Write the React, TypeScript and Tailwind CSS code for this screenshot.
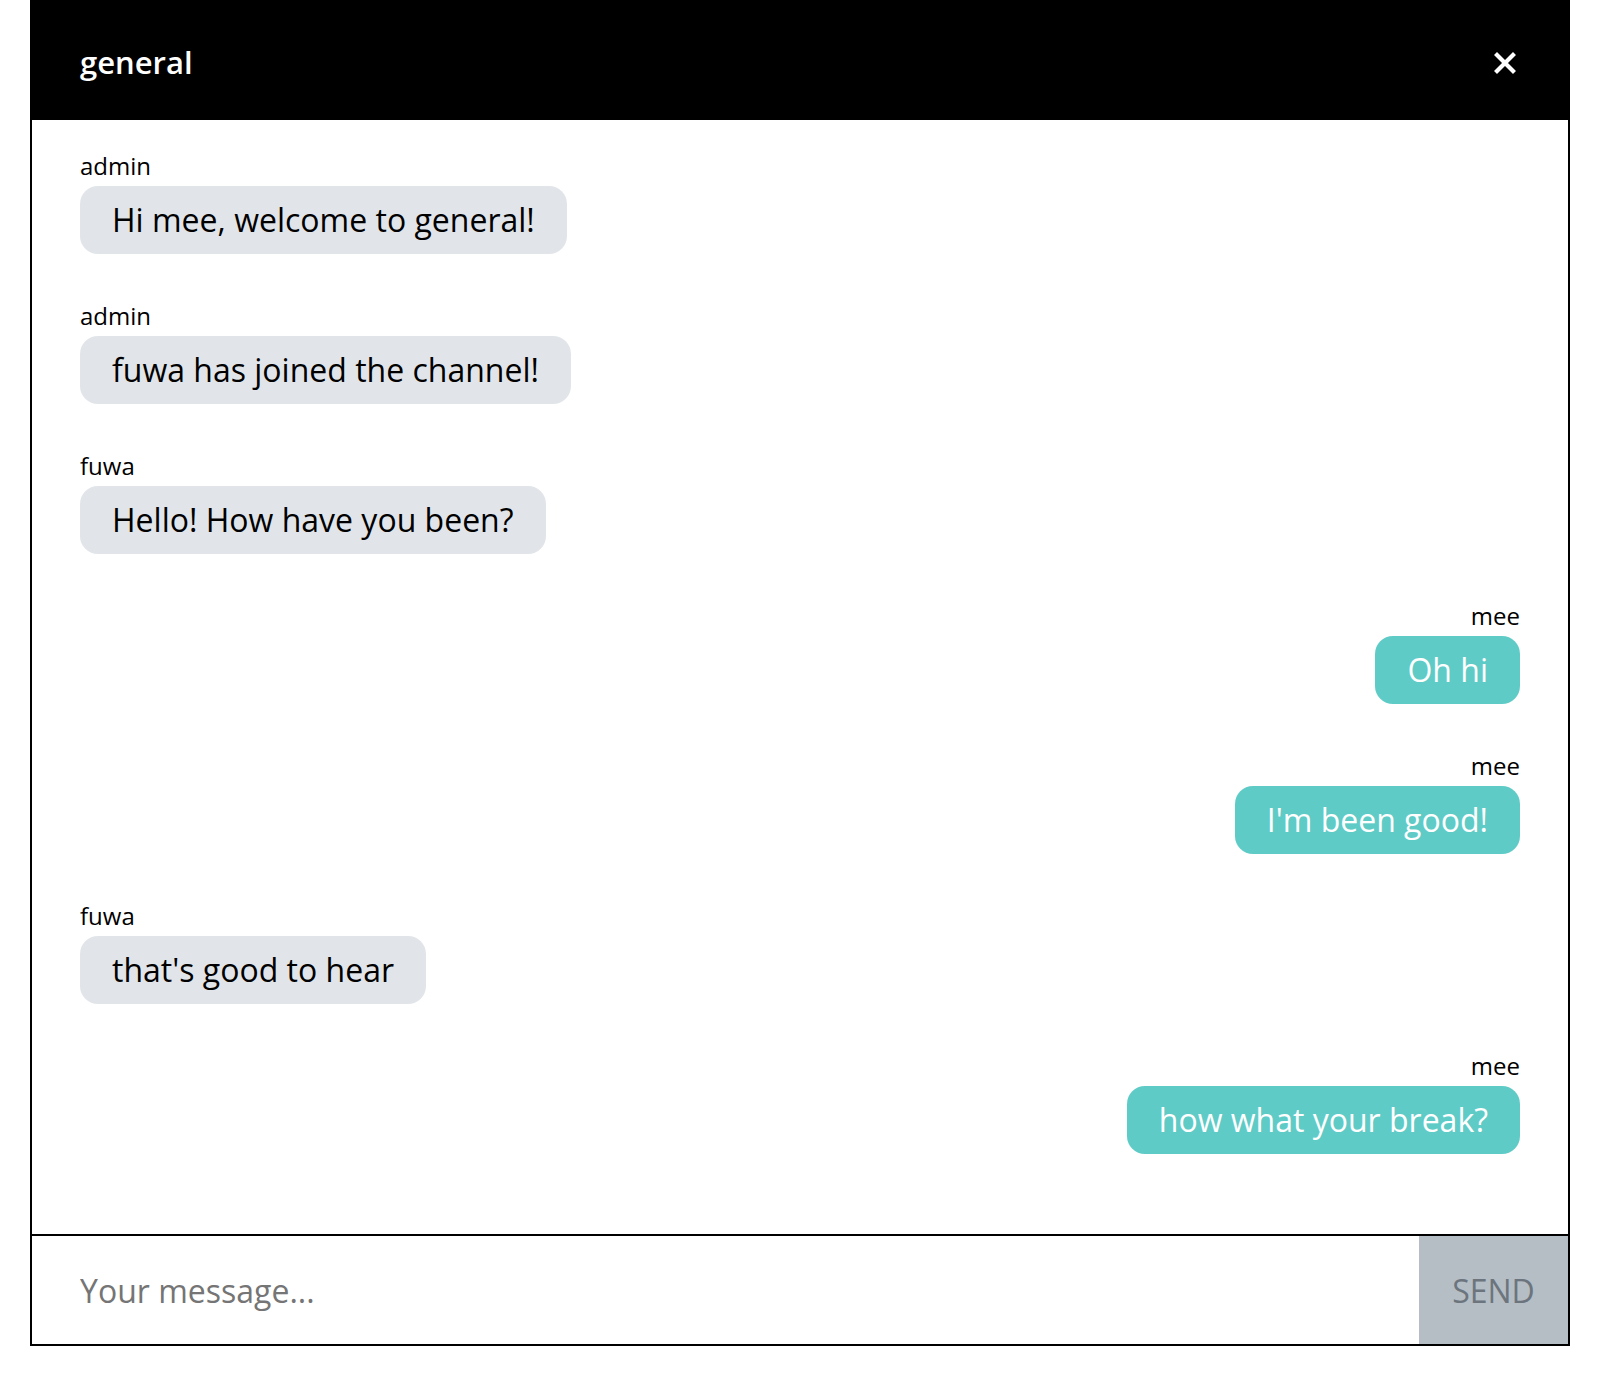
import React, { useState } from 'react';

interface Message {
  user: string;
  text: string;
}

const ME = 'mee';

const messages: Message[] = [
  { user: 'admin', text: 'Hi mee, welcome to general!' },
  { user: 'admin', text: 'fuwa has joined the channel!' },
  { user: 'fuwa', text: 'Hello! How have you been?' },
  { user: 'mee', text: 'Oh hi' },
  { user: 'mee', text: "I'm been good!" },
  { user: 'fuwa', text: "that's good to hear" },
  { user: 'mee', text: 'how what your break?' },
];

const CloseIcon = () => (
  <svg width="22" height="22" viewBox="0 0 22 22" fill="none">
    <path d="M3 3L19 19M19 3L3 19" stroke="white" strokeWidth="4.2" strokeLinecap="square" />
  </svg>
);

const App: React.FC = () => {
  const [draft, setDraft] = useState('');

  return (
    <div className="min-h-screen bg-white" style={{ fontFamily: '"Open Sans", "Noto Sans", sans-serif' }}>
      <div className="ml-[30px] w-[1540px] border-2 border-t-0 border-black flex flex-col">
        <div className="h-[120px] bg-black flex items-center justify-between pl-[48px] pr-[52px]">
          <h1 className="text-white text-[31px] font-semibold leading-none pt-[4px]">general</h1>
          <button className="pt-[6px]">
            <CloseIcon />
          </button>
        </div>

        <div className="flex flex-col px-[48px] pt-[29px] pb-[80px]">
          {messages.map((m, i) => {
            const mine = m.user === ME;
            return (
              <div
                key={i}
                className={`flex flex-col ${mine ? 'items-end' : 'items-start'} ${
                  i < messages.length - 1 ? 'mb-[45px]' : ''
                }`}
              >
                <span className="text-[24px] leading-[33px] text-black mb-[4px]">{m.user}</span>
                <div
                  className={`px-[32px] py-[12px] text-[32px] leading-[44px] rounded-[18px] ${
                    mine ? 'bg-[#5ecbc6] text-white' : 'bg-[#e1e5e9] text-black'
                  }`}
                >
                  {m.text}
                </div>
              </div>
            );
          })}
        </div>

        <div className="flex h-[110px] border-t-2 border-black">
          <input
            value={draft}
            onChange={(e) => setDraft(e.target.value)}
            placeholder="Your message..."
            className="flex-1 pl-[48px] pt-[2px] text-[32px] text-black placeholder:text-[#757575] outline-none bg-white"
          />
          <button className="w-[149px] bg-[#b5bec5] text-[#6c757d] text-[32px] uppercase pt-[2px]">Send</button>
        </div>
      </div>
    </div>
  );
};

export default App;
